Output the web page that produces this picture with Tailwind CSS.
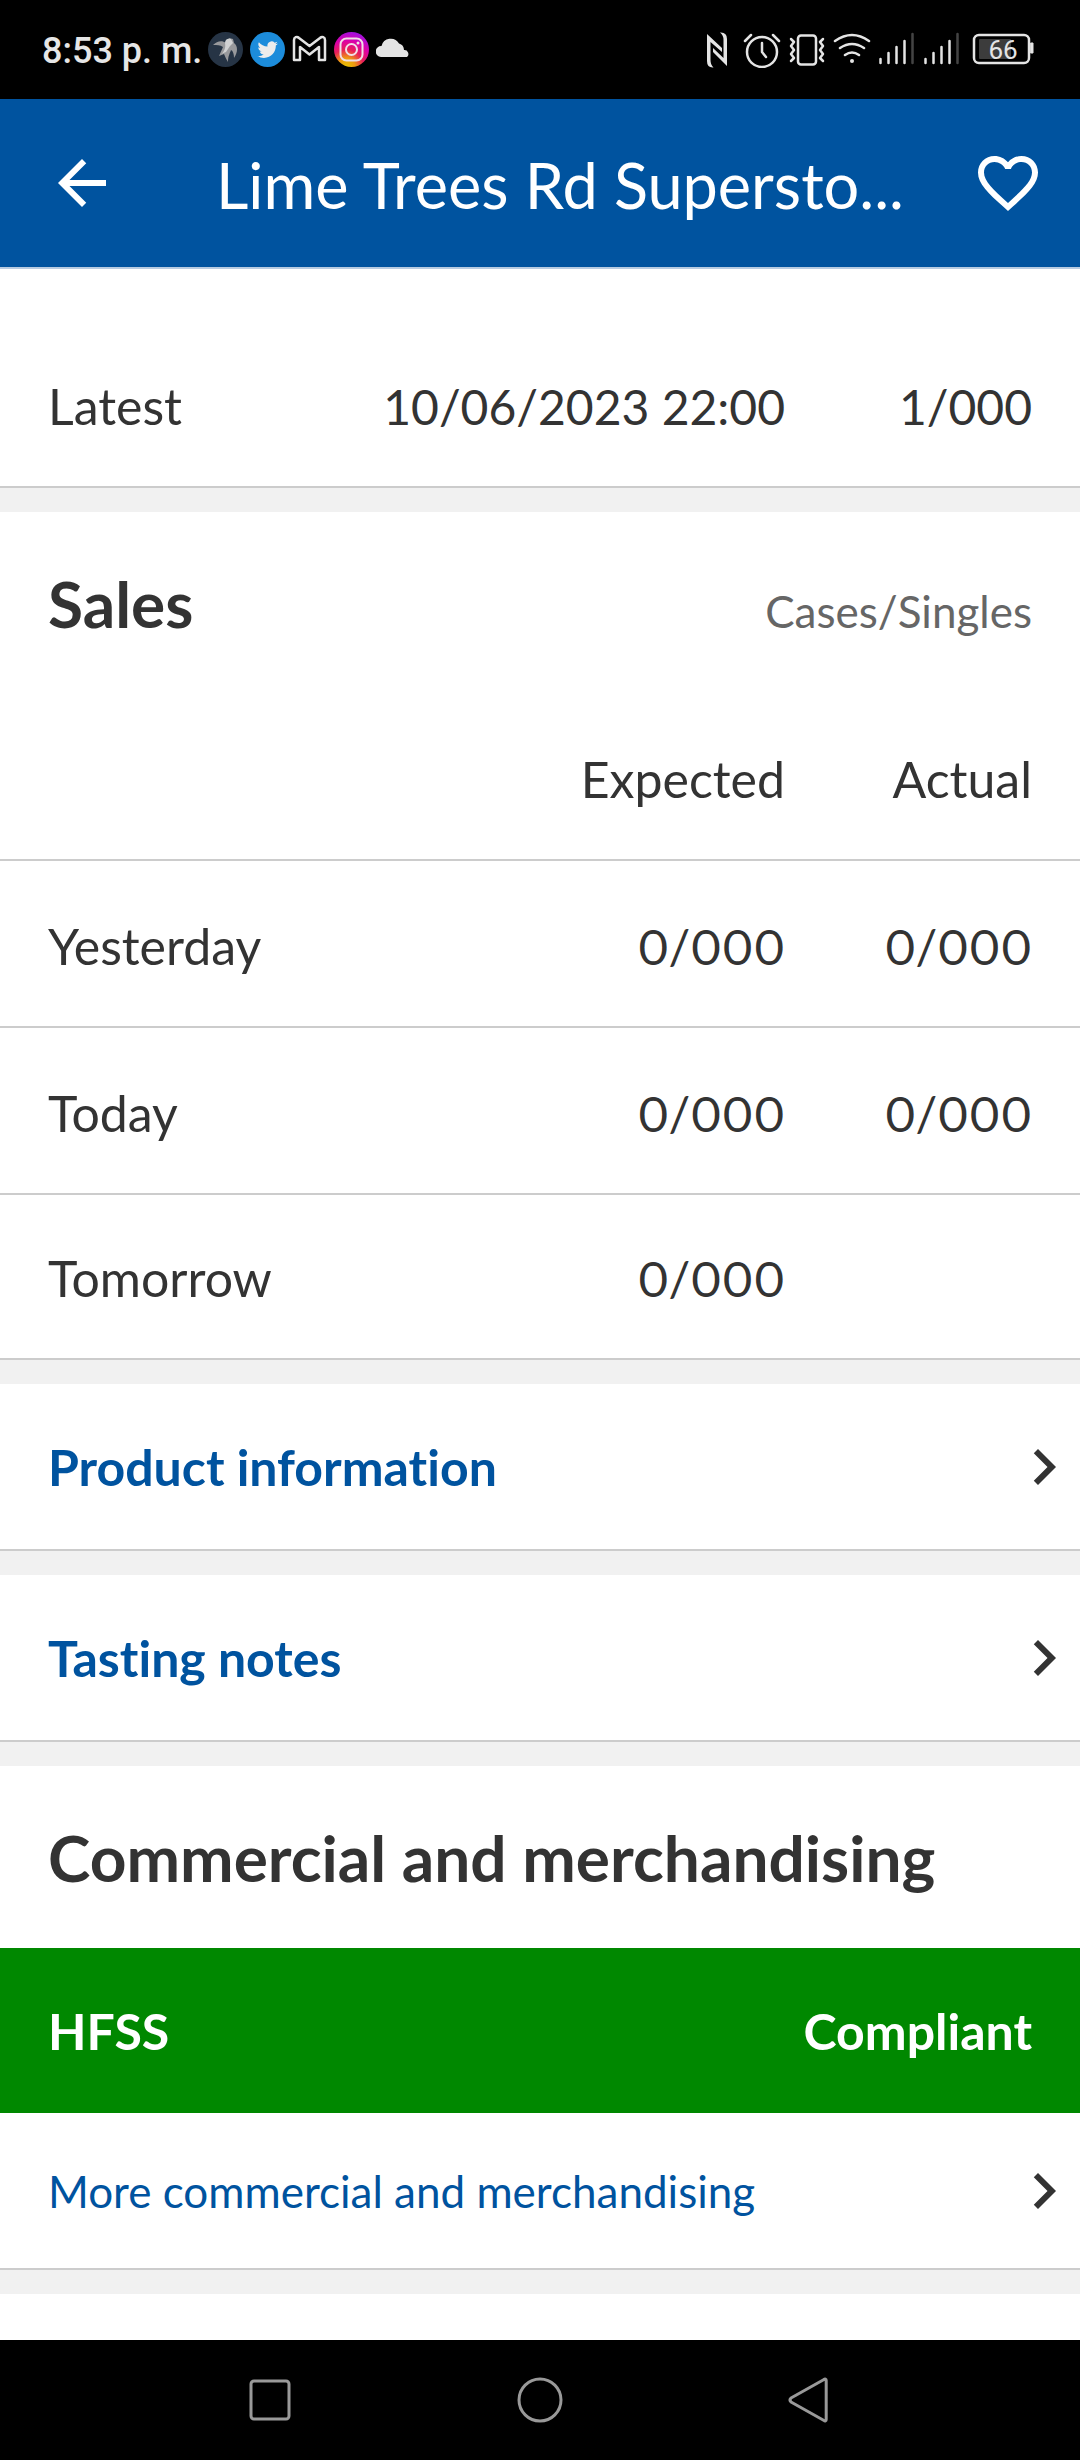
<!DOCTYPE html>
<html lang="en">
<head>
<meta charset="utf-8">
<meta name="viewport" content="width=device-width, initial-scale=1">
<title>Lime Trees Rd Superstore</title>
<script src="https://cdn.jsdelivr.net/npm/@tailwindcss/browser@4"></script>
</head>
<body class="flex min-h-screen flex-col bg-white font-[Lato,sans-serif] text-[50px] leading-[65px] text-[#333] [font-variant-ligatures:none]">

<!-- Status bar -->
<div class="flex h-[99px] items-center justify-between bg-black pr-[46px] pl-[42px] font-[Roboto,sans-serif] text-[#e6e6e6]">
  <div class="flex items-center gap-[7px]">
    <span class="-mr-[1px] pt-[2px] text-[36px] font-medium leading-[48px]">8:53 p. m.</span>
    <svg class="size-[35px]" viewBox="0 0 35 35"><circle cx="17.500" cy="17.500" r="17.500" fill="#263445"/><path d="M5 13C9 9 14 8 18 11l3-5 4 1 1 4c4 3 4 9 0 15 0-4-1-7-3-8-1 3-3 6-3 12-2-3-3-6-4-8l-5 2 4-9c-3-2-6-2-10-2z" fill="#98999c"/><path d="M17 11c0-4 3-5 6-4l2 4-3 3-4 6c-2 1-3 1-4 2 2-3 4-6 3-11z" fill="#d0d1d2"/></svg>
    <svg class="size-[35px]" viewBox="0 0 35 35"><circle cx="17.500" cy="17.500" r="17.500" fill="#1c8cdb"/><path transform="translate(7.500 7.500) scale(.85)" fill="#ececec" d="M23.953 4.570a10 10 0 01-2.825.775 4.958 4.958 0 002.163-2.723c-.951.555-2.005.959-3.127 1.184a4.920 4.920 0 00-8.384 4.482C7.690 8.095 4.067 6.130 1.640 3.162a4.822 4.822 0 00-.666 2.475c0 1.710.870 3.213 2.188 4.096a4.904 4.904 0 01-2.228-.616v.060a4.923 4.923 0 003.946 4.827 4.996 4.996 0 01-2.212.085 4.936 4.936 0 004.604 3.417 9.867 9.867 0 01-6.102 2.105c-.390 0-.779-.023-1.170-.067a13.995 13.995 0 007.557 2.209c9.053 0 13.998-7.496 13.998-13.985 0-.210 0-.420-.015-.630A9.935 9.935 0 0024 4.590z"/></svg>
    <svg class="size-[35px]" viewBox="0 0 35 35" fill="none" stroke="#e4e4e4" stroke-width="2.500" stroke-linejoin="round"><path d="M2 28V8c0-3 3-4 5-2l10.500 8L28 6c2-2 5-1 5 2v20h-6V15l-9.500 7.500L8 15v13z"/></svg>
    <svg class="size-[35px]" viewBox="0 0 35 35"><defs><radialGradient id="insta" cx=".35" cy="1" r="1"><stop offset="0" stop-color="#e8c400"/><stop offset=".25" stop-color="#ee9a12"/><stop offset=".5" stop-color="#e81f58"/><stop offset=".75" stop-color="#dc00a8"/><stop offset="1" stop-color="#a510dc"/></radialGradient></defs><circle cx="17.500" cy="17.500" r="17.500" fill="url(#insta)"/><g fill="none" stroke="#f0dfe8" stroke-width="2"><rect x="6.500" y="6.500" width="22" height="22" rx="6"/><circle cx="17.500" cy="17.500" r="5.500"/></g><circle cx="24" cy="11" r="1.500" fill="#f0dfe8"/></svg>
    <svg class="size-[35px]" viewBox="0 0 35 35"><path d="M5 25a5.500 5.500 0 01.5-11A9.500 9.500 0 0123 11.500a7 7 0 015 6.500A4 4 0 0131 25z" fill="#e4e4e4"/></svg>
  </div>
  <div class="flex items-center">
    <!-- NFC, alarm, vibrate, wi-fi, two signal meters, battery -->
    <svg class="h-[36px] w-[327px]" viewBox="0 0 327 36" fill="none" stroke="#e4e4e4" stroke-width="2.500" stroke-linecap="round" stroke-linejoin="round">
      <path d="M0 2l15 14v4L3.500 10v18q0 5 3 7.500Q0 36 0 29zM13 .5Q20 0 20 7v27L6 20v-4l10.500 10V8q0-5-3.500-7.500z" fill="#e4e4e4" stroke="none"/>
      <g><circle cx="55" cy="20" r="15"/><path d="M55 11v9l4 5M38 9l6-6M72 9l-6-6"/></g>
      <rect x="91" y="3.500" width="18" height="29" rx="3"/>
      <path d="M84 7l3 3-3 4 3 4-3 4 3 4-3 3M116 7l-3 3 3 4-3 4 3 4-3 4 3 3"/>
      <path d="M128 9q17-12 34 0M133 16q12-8 24 0M138 23q7-5 14 0"/><circle cx="145" cy="29" r="2" fill="#e4e4e4" stroke="none"/>
      <path d="M173.500 27v4M181.500 21v10M189.500 15v16M197.500 9v22M218.500 27v4M226.500 21v10M234.500 15v16M242.500 9v22"/>
      <path d="M205.500 2v29M250.500 2v29" stroke="#444"/>
      <rect x="267" y="3" width="55" height="28" rx="5"/>
      <rect x="272" y="7" width="32" height="20" rx="1" fill="#3c3c3c" stroke="none"/>
      <path d="M324 11h2v10h-2z" fill="#e4e4e4" stroke-width="1"/>
      <text x="296" y="27" text-anchor="middle" font-family="Roboto, sans-serif" font-size="26" fill="#e4e4e4" stroke="none">66</text>
    </svg>
  </div>
</div>

<!-- App bar -->
<header class="flex h-[170px] items-center border-b-2 border-[#b8cce2] bg-[#00539f] pr-[36px] pl-[46px] text-white">
  <button type="button" aria-label="Back" class="shrink-0"><svg class="size-[72px]" viewBox="0 0 24 24" fill="currentColor"><path d="M20 11H7.830l5.590-5.590L12 4l-8 8 8 8 1.410-1.410L7.830 13H20z"/></svg></button>
  <h1 class="min-w-0 flex-1 overflow-hidden pt-1 pl-[98px] text-[63px] leading-[76px] whitespace-nowrap">Lime Trees Rd Supersto...</h1>
  <button type="button" aria-label="Add to favourites" class="shrink-0"><svg class="size-[72px]" viewBox="0 0 24 24" fill="currentColor"><path d="M16.500 3c-1.740 0-3.410.810-4.500 2.090C10.910 3.810 9.240 3 7.500 3 4.420 3 2 5.420 2 8.500c0 3.780 3.400 6.860 8.550 11.540L12 21.350l1.450-1.320C18.600 15.360 22 12.280 22 8.500 22 5.420 19.580 3 16.500 3zm-4.400 15.550l-.1.100-.1-.1C7.140 14.240 4 11.390 4 8.500 4 6.500 5.500 5 7.500 5c1.540 0 3.040.990 3.570 2.360h1.870C13.460 5.990 14.960 5 16.500 5c2 0 3.500 1.500 3.500 3.500 0 2.890-3.140 5.740-7.900 10.050z"/></svg></button>
</header>

<main class="flex-1">
  <section class="border-b-2 border-[#ccc] pt-[52px]">
    <table class="w-full border-separate border-spacing-0">
      <tbody>
        <tr class="align-baseline">
          <th scope="row" class="pt-[53px] pb-[47px] pl-12 text-left font-normal">Latest</th>
          <td class="pt-[53px] pb-[47px] text-right text-[48px]">10/06/2023 22:00</td>
          <td class="w-[295px] pt-[53px] pr-12 pb-[47px] text-right text-[48px]">1/000</td>
        </tr>
      </tbody>
    </table>
  </section>
  <div class="h-6 bg-[#f1f1f1]"></div>

  <section>
    <div class="flex h-[182px] items-baseline justify-between px-12 pt-[54px]">
      <h2 class="text-[64px] leading-[76px] font-bold">Sales</h2>
      <span class="text-[44px] text-[#666]">Cases/Singles</span>
    </div>
    <table class="w-full border-separate border-spacing-0 proportional-nums [&_td]:border-b-2 [&_td]:border-[#ccc] [&_td]:text-[48px] [&_th]:border-b-2 [&_th]:border-[#ccc]">
      <thead>
        <tr>
          <td class="pt-[53px] pb-[47px] pl-12"></td>
          <th scope="col" class="pt-[53px] pb-[47px] text-right font-normal">Expected</th>
          <th scope="col" class="w-[295px] pt-[53px] pr-12 pb-[47px] text-right font-normal">Actual</th>
        </tr>
      </thead>
      <tbody>
        <tr>
          <th scope="row" class="pt-[53px] pb-[47px] pl-12 text-left font-normal">Yesterday</th>
          <td class="pt-[53px] pb-[47px] text-right">0/000</td>
          <td class="pt-[53px] pr-12 pb-[47px] text-right">0/000</td>
        </tr>
        <tr>
          <th scope="row" class="pt-[53px] pb-[47px] pl-12 text-left font-normal">Today</th>
          <td class="pt-[53px] pb-[47px] text-right">0/000</td>
          <td class="pt-[53px] pr-12 pb-[47px] text-right">0/000</td>
        </tr>
        <tr>
          <th scope="row" class="pt-[51px] pb-[47px] pl-12 text-left font-normal">Tomorrow</th>
          <td class="pt-[51px] pb-[47px] text-right">0/000</td>
          <td class="pt-[51px] pr-12 pb-[47px]"></td>
        </tr>
      </tbody>
    </table>
  </section>
  <div class="h-6 bg-[#f1f1f1]"></div>

  <a href="#product-information" class="flex items-center justify-between border-b-2 border-[#ccc] py-[49px] pl-12 font-bold text-[#00539f]">
    <span class="pt-[2px]">Product information</span>
    <svg class="-my-1 size-[72px] text-[#333]" viewBox="0 0 24 24" fill="currentColor"><path d="M10 6L8.590 7.410 13.170 12l-4.580 4.590L10 18l6-6z"/></svg>
  </a>
  <div class="h-6 bg-[#f1f1f1]"></div>

  <a href="#tasting-notes" class="flex items-center justify-between border-b-2 border-[#ccc] py-[49px] pl-12 font-bold text-[#00539f]">
    <span class="pt-[2px]">Tasting notes</span>
    <svg class="-my-1 size-[72px] text-[#333]" viewBox="0 0 24 24" fill="currentColor"><path d="M10 6L8.590 7.410 13.170 12l-4.580 4.590L10 18l6-6z"/></svg>
  </a>
  <div class="h-6 bg-[#f1f1f1]"></div>

  <section>
    <h2 class="px-12 pt-[54px] pb-[52px] text-[64px] leading-[76px] font-bold whitespace-nowrap">Commercial and merchandising</h2>
    <div class="flex items-center justify-between bg-[#008800] px-12 py-[49px] font-bold text-white">
      <span class="pt-[2px]">HFSS</span>
      <span class="pt-[2px]">Compliant</span>
    </div>
    <a href="#more" class="flex items-center justify-between border-b-2 border-[#ccc] py-[44px] pl-12 text-[44px] text-[#00539f]">
      <span class="pt-[2px]">More commercial and merchandising</span>
      <svg class="-my-1 size-[72px] text-[#333]" viewBox="0 0 24 24" fill="currentColor"><path d="M10 6L8.590 7.410 13.170 12l-4.580 4.590L10 18l6-6z"/></svg>
    </a>
  </section>
  <div class="h-6 bg-[#f1f1f1]"></div>
</main>

<!-- System navigation -->
<nav class="grid h-[120px] grid-cols-3 items-center justify-items-center bg-black px-[12.5%] text-[#999]">
  <button type="button" aria-label="Recent apps"><svg class="size-[48px]" viewBox="0 0 48 48" fill="none" stroke="currentColor" stroke-width="3"><rect x="5" y="5" width="38" height="38" rx="3"/></svg></button>
  <button type="button" aria-label="Home"><svg class="size-[48px]" viewBox="0 0 48 48" fill="none" stroke="currentColor" stroke-width="3"><circle cx="24" cy="24" r="21"/></svg></button>
  <button type="button" aria-label="Back"><svg class="size-[48px]" viewBox="0 0 48 48" fill="none" stroke="currentColor" stroke-width="3" stroke-linejoin="round"><path d="M38 3.500c1-1 2.200-.6 2.200 1v39c0 1.600-1.200 2-2.200 1L5 26c-1.200-1.200-1.200-2.800 0-4z"/></svg></button>
</nav>
</body>
</html>
